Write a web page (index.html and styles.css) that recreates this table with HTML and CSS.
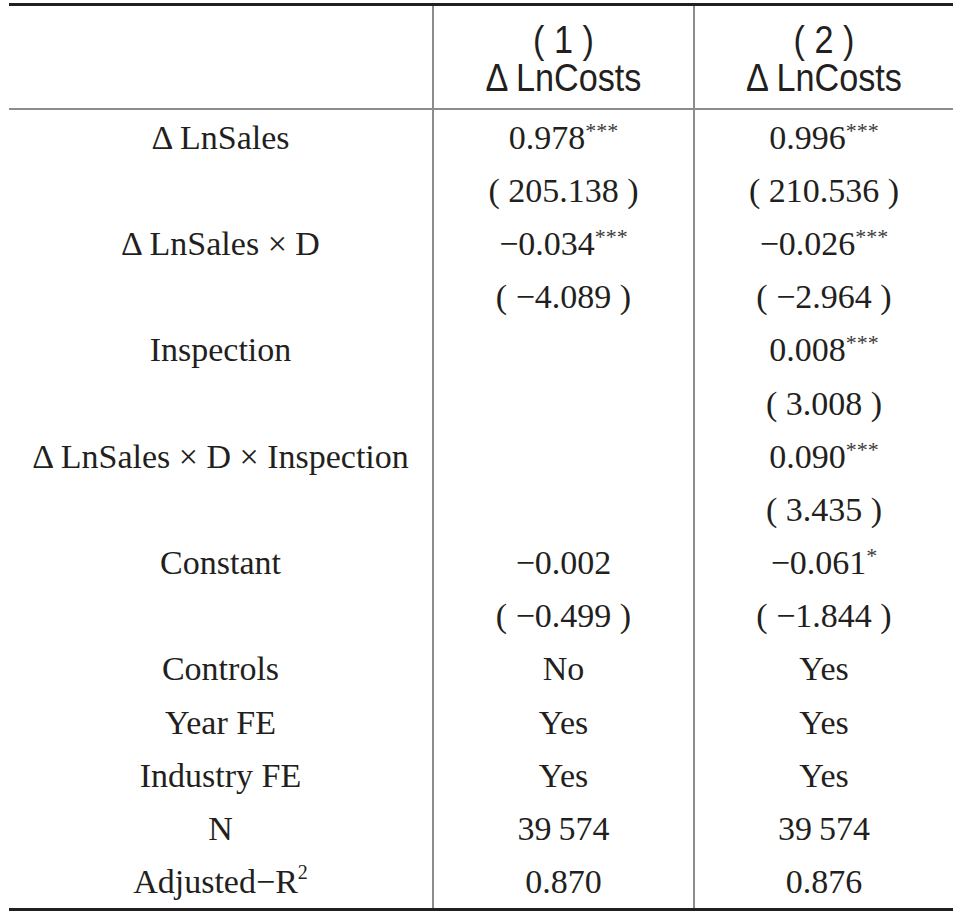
FILE: index.html
```html
<!DOCTYPE html>
<html lang="en">
<head>
<meta charset="utf-8">
<title>Regression table</title>
<link rel="stylesheet" href="styles.css">
</head>
<body>
<table class="reg">
  <thead>
    <tr>
      <th class="col-label"></th>
      <th class="col-a"><span class="h">( 1 )</span><span class="h">Δ LnCosts</span></th>
      <th class="col-b"><span class="h">( 2 )</span><span class="h">Δ LnCosts</span></th>
    </tr>
  </thead>
  <tbody>
    <tr><td>Δ LnSales</td><td>0.978<span class="sig">***</span></td><td>0.996<span class="sig">***</span></td></tr>
    <tr><td></td><td>( 205.138 )</td><td>( 210.536 )</td></tr>
    <tr><td>Δ LnSales × D</td><td>−0.034<span class="sig">***</span></td><td>−0.026<span class="sig">***</span></td></tr>
    <tr><td></td><td>( −4.089 )</td><td>( −2.964 )</td></tr>
    <tr><td>Inspection</td><td></td><td>0.008<span class="sig">***</span></td></tr>
    <tr><td></td><td></td><td>( 3.008 )</td></tr>
    <tr><td>Δ LnSales × D × Inspection</td><td></td><td>0.090<span class="sig">***</span></td></tr>
    <tr><td></td><td></td><td>( 3.435 )</td></tr>
    <tr><td>Constant</td><td>−0.002</td><td>−0.061<span class="sig">*</span></td></tr>
    <tr><td></td><td>( −0.499 )</td><td>( −1.844 )</td></tr>
    <tr><td>Controls</td><td>No</td><td>Yes</td></tr>
    <tr><td>Year FE</td><td>Yes</td><td>Yes</td></tr>
    <tr><td>Industry FE</td><td>Yes</td><td>Yes</td></tr>
    <tr><td>N</td><td>39&thinsp;574</td><td>39&thinsp;574</td></tr>
    <tr><td>Adjusted−R<span class="pow">2</span></td><td>0.870</td><td>0.876</td></tr>
  </tbody>
</table>
</body>
</html>
```

FILE: styles.css
```css
html, body {
  margin: 0;
  padding: 0;
  background: #ffffff;
}

body {
  padding: 3px 0 0 9px;
}

.reg {
  border-collapse: separate;
  border-spacing: 0;
  table-layout: fixed;
  width: 944px;
  border-top: 3px solid #231f20;
  border-bottom: 3px solid #231f20;
  font-family: "Liberation Serif", "Times New Roman", serif;
  font-size: 34px;
  color: #231f20;
}

.reg th,
.reg td {
  box-sizing: border-box;
  padding: 0;
  text-align: center;
  vertical-align: middle;
  white-space: nowrap;
}

.reg th {
  height: 104px;
  border-bottom: 2px solid #8c8c8c;
  padding-top: 3px;
  font-family: "Liberation Sans", Arial, sans-serif;
  font-weight: normal;
  font-size: 38px;
  line-height: 38px;
}

.col-label { width: 425px; }
.col-a { width: 261px; }
.col-b { width: 258px; }

.reg th:nth-child(1),
.reg th:nth-child(2),
.reg td:nth-child(1),
.reg td:nth-child(2) {
  border-right: 2px solid #8c8c8c;
}

.h {
  display: block;
  transform: scaleX(0.9);
}

.reg td {
  height: 53.2px;
  padding-top: 2px;
  line-height: 40px;
}

.sig {
  font-size: 22px;
  line-height: 0;
  vertical-align: 11px;
  color: #3a3a3a;
}

.pow {
  font-size: 20px;
  line-height: 0;
  vertical-align: 14px;
}
```
